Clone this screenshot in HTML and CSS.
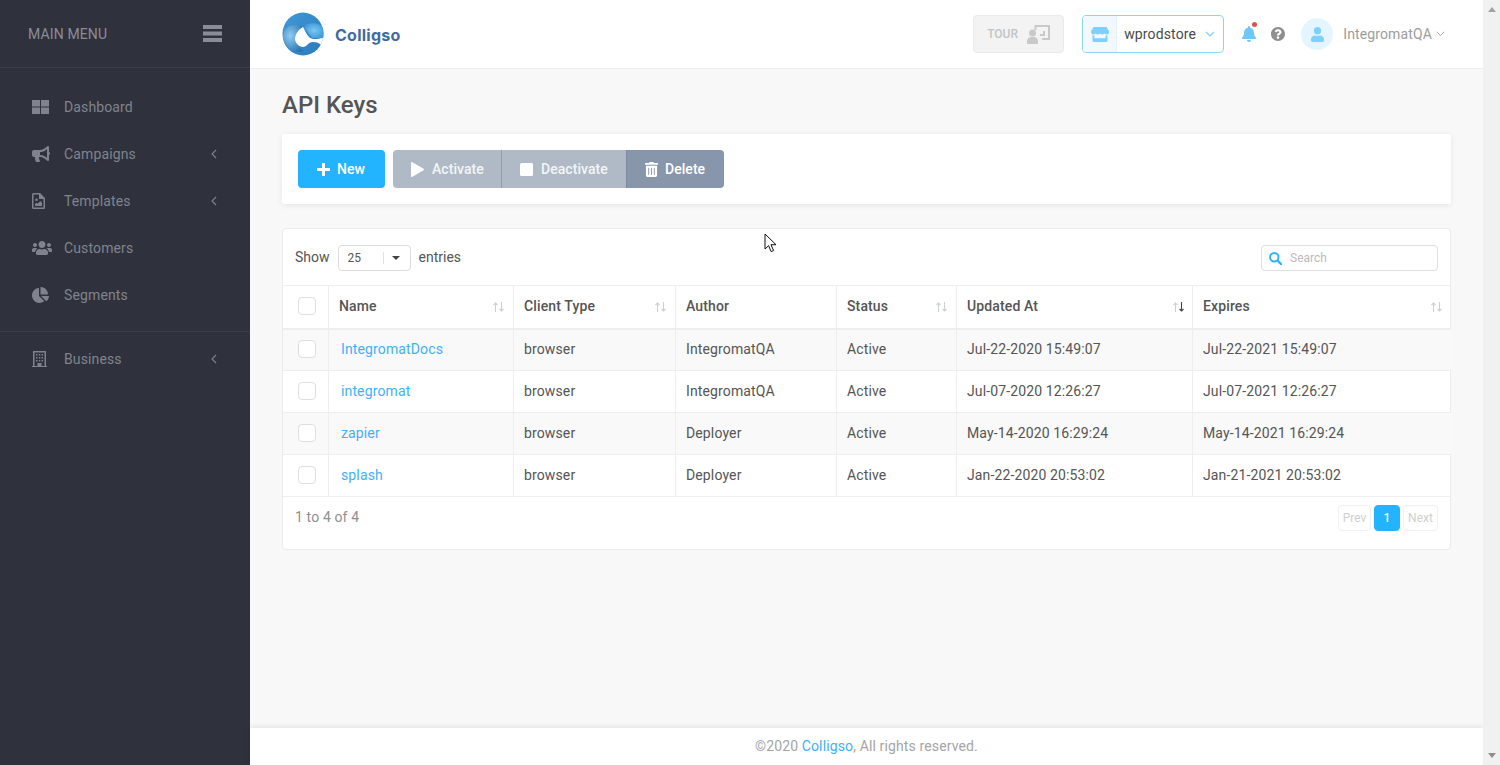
FILE: index.html
```html
<!DOCTYPE html>
<html lang="en">
<head>
<meta charset="utf-8">
<title>API Keys - Colligso</title>
<link rel="stylesheet" href="styles.css">
</head>
<body>
<div class="app">
  <aside class="sidebar">
    <div class="side-head">
      <span class="side-title">MAIN MENU</span>
      <svg class="burger" width="19" height="17" viewBox="0 0 19 17"><path d="M0 0h19v4H0zM0 6.500h19v4H0zM0 13h19v4H0z" fill="#8a8d97"/></svg>
    </div>
    <nav class="side-group">
      <a class="side-item"><span class="side-icon"><svg width="17" height="14" viewBox="0 0 17 14"><path d="M0 0h8v6.500H0zM9 0h8v6.500H9zM0 7.500h8V14H0zM9 7.500h8V14H9z"/></svg></span><span class="side-label">Dashboard</span></a>
      <a class="side-item"><span class="side-icon"><svg width="18" height="16" viewBox="0 0 576 512"><path d="M576 240c0-23.630-12.950-44.040-32-55.120V32.010C544 23.260 537.020 0 512 0c-7.120 0-14.190 2.380-19.980 7.020l-85.030 68.030C364.280 109.190 310.660 128 256 128H64c-35.350 0-64 28.650-64 64v96c0 35.350 28.650 64 64 64h33.700c-1.390 10.480-2.180 21.140-2.180 32 0 39.770 9.260 77.350 25.560 110.940 5.190 10.690 16.520 17.060 28.400 17.060h74.280c26.050 0 41.690-29.840 25.900-50.560-16.400-21.520-26.150-48.360-26.150-77.440 0-11.110 1.620-21.790 4.410-32H256c54.660 0 108.280 18.810 150.980 52.950l85.030 68.030a32.023 32.023 0 0 0 19.980 7.020c24.920 0 32-22.780 32-32V295.130C563.050 284.040 576 263.630 576 240zm-96 141.420l-33.050-26.440C392.950 311.780 325.120 288 256 288v-96c69.120 0 136.950-23.780 190.950-66.980L480 98.580v282.840z"/></svg></span><span class="side-label">Campaigns</span><svg class="side-chev" width="6" height="10" viewBox="0 0 6 10"><path d="M5 1 1 5l4 4" fill="none" stroke="#80838d" stroke-width="1.100"/></svg></a>
      <a class="side-item"><span class="side-icon"><svg width="13" height="16" viewBox="0 0 13 16"><path fill-rule="evenodd" d="M1.500 0H8l5 5v9.500a1.500 1.500 0 0 1-1.500 1.500h-10A1.500 1.500 0 0 1 0 14.500v-13A1.500 1.500 0 0 1 1.500 0zM1.500 1.500v13h10V6H7V1.500zM4.500 5.500a1.300 1.300 0 1 1 0 2.600 1.300 1.300 0 0 1 0-2.600zM3 13v-2l1.500-1.300 1.200 1.100L8.300 8 10 10v3z"/></svg></span><span class="side-label">Templates</span><svg class="side-chev" width="6" height="10" viewBox="0 0 6 10"><path d="M5 1 1 5l4 4" fill="none" stroke="#80838d" stroke-width="1.100"/></svg></a>
      <a class="side-item"><span class="side-icon"><svg width="20" height="16" viewBox="0 0 640 512"><path d="M96 224c35.300 0 64-28.700 64-64s-28.700-64-64-64-64 28.700-64 64 28.700 64 64 64zm448 0c35.300 0 64-28.700 64-64s-28.700-64-64-64-64 28.700-64 64 28.700 64 64 64zm32 32h-64c-17.600 0-33.500 7.100-45.100 18.600 40.300 22.100 68.900 62 75.100 109.400h66c17.700 0 32-14.300 32-32v-32c0-35.300-28.700-64-64-64zm-256 0c61.900 0 112-50.100 112-112S381.900 32 320 32 208 82.100 208 144s50.100 112 112 112zm76.800 32h-8.300c-20.800 10-43.900 16-68.500 16s-47.600-6-68.500-16h-8.300C179.600 288 128 339.600 128 403.200V432c0 26.500 21.500 48 48 48h288c26.500 0 48-21.500 48-48v-28.800c0-63.600-51.600-115.200-115.200-115.200zm-223.700-13.400C161.500 263.100 145.600 256 128 256H64c-35.300 0-64 28.700-64 64v32c0 17.700 14.300 32 32 32h65.900c6.300-47.400 34.900-87.300 75.200-109.400z"/></svg></span><span class="side-label">Customers</span></a>
      <a class="side-item"><span class="side-icon"><svg width="17" height="16" viewBox="0 0 544 512"><path d="M527.790 288H290.500l158.030 158.030c6.040 6.040 15.980 6.530 22.190.68 38.700-36.460 65.320-85.610 73.130-140.860 1.340-9.460-6.510-17.850-16.060-17.850zm-15.830-64.800C503.720 103.740 408.260 8.280 288.800.04 279.680-.59 272 7.100 272 16.240V240h223.770c9.140 0 16.820-7.680 16.190-16.800zM224 288V50.710c0-9.550-8.390-17.400-17.840-16.060C86.990 51.490-4.100 155.600.14 280.370 4.500 408.510 114.830 513.590 243.030 511.980c50.400-.63 96.970-16.870 135.260-44.030 7.900-5.600 8.420-17.230 1.570-24.080L224 288z"/></svg></span><span class="side-label">Segments</span></a>
    </nav>
    <nav class="side-group side-group-last">
      <a class="side-item"><span class="side-icon"><svg width="15" height="16" viewBox="0 0 15 16"><path fill-rule="evenodd" d="M1 0h13v15h1v1H0v-1h1zM2.500 1.500v13.500h3v-3h4v3h3V1.500zM4 3h1.500v1.500H4zM6.800 3h1.500v1.500H6.800zM9.500 3H11v1.500H9.500zM4 6h1.500v1.500H4zM6.800 6h1.500v1.500H6.800zM9.500 6H11v1.500H9.500zM4 9h1.500v1.500H4zM6.800 9h1.500v1.500H6.800zM9.500 9H11v1.500H9.500z"/></svg></span><span class="side-label">Business</span><svg class="side-chev" width="6" height="10" viewBox="0 0 6 10"><path d="M5 1 1 5l4 4" fill="none" stroke="#80838d" stroke-width="1.100"/></svg></a>
    </nav>
  </aside>

  <div class="main">
    <header class="topbar">
      <div class="brand">
        <svg class="logo" width="42" height="44" viewBox="0 0 42 44">
          <defs>
            <linearGradient id="lg" x1="0" y1="0" x2="1" y2="1"><stop offset="0" stop-color="#3f9ad8"/><stop offset="1" stop-color="#2c79b9"/></linearGradient>
            <radialGradient id="rg" cx="0.35" cy="0.4" r="0.7"><stop offset="0" stop-color="#8fcdf0"/><stop offset="1" stop-color="#2a73b3"/></radialGradient>
            <radialGradient id="rb" cx="0.5" cy="0.5" r="0.55"><stop offset="0" stop-color="#7cc8f2"/><stop offset="1" stop-color="#3f9ad8"/></radialGradient>
            <clipPath id="disc"><ellipse cx="21" cy="22" rx="20.500" ry="21.500"/></clipPath>
          </defs>
          <g clip-path="url(#disc)">
            <rect width="42" height="44" fill="url(#lg)"/>
            <path d="M1 27C0 18 6 12 14 13c3 .5 5 1 7 2-5 3-8 8-8 12 0 5 4 9 9 12-10 3-20-2-21-12z" fill="url(#rg)"/>
            <path d="M22 15c3-5 14-6 20 1v10H30z" fill="url(#rb)"/>
            <path d="M21 15C17 17 13 22 13 27 13 31 17 35 21 35 25 35 26 30 31 30 35 30 37 31 39 33L44 28 41 26C35 27 30 28 27 25 24 22 23 18 21 15z" fill="#fff"/>
          </g>
        </svg>
        <span class="brand-name">Colligso</span>
      </div>
      <div class="top-right">
        <button class="tour"><span>TOUR</span><svg width="23" height="19" viewBox="0 0 23 19"><path fill="none" stroke="#c9c9c9" stroke-width="2" d="M8.500 5V1h13.500v13h-7M13 10h4V6"/><circle cx="5.500" cy="8" r="3.500" fill="#c9c9c9"/><path fill="#c9c9c9" d="M0 19v-3c0-2 2-4 4-4h3c2 0 4 2 4 4v3z"/></svg></button>
        <div class="store">
          <span class="store-icon"><svg width="18" height="15" viewBox="0 0 616 512"><path fill="#7fcfff" d="M602 118.600L537.100 15C531.300 5.700 521 0 510 0H106C95 0 84.700 5.700 78.900 15L14 118.600c-33.900 54.100-3.800 129.300 59.600 137.900 4.600.6 9.200 1 13.700 1 29.900 0 56.400-13.100 74.800-33.400 18.400 20.300 45 33.400 74.800 33.400 29.900 0 56.400-13.100 74.800-33.400 18.400 20.300 45 33.400 74.800 33.400 29.900 0 56.400-13.100 74.800-33.400 18.500 20.300 45 33.400 74.800 33.400 4.600 0 9.100-.3 13.700-1 63.600-8.500 93.800-83.700 59.900-137.900zM529.500 288c-10 0-19.900-1.500-29.500-3.800V384H116v-99.800c-9.600 2.200-19.500 3.800-29.500 3.800-6 0-12.100-.4-18-1.200-5.600-.8-11.100-2.100-16.400-3.600V480c0 17.700 14.300 32 32 32h448c17.700 0 32-14.300 32-32V283.200c-5.400 1.600-10.800 2.900-16.400 3.600-6.100.8-12.100 1.200-18.200 1.200z"/></svg></span>
          <span class="store-name">wprodstore</span>
          <svg class="store-chev" width="10" height="6" viewBox="0 0 10 6"><path d="M1 1l4 4 4-4" fill="none" stroke="#7fcfff" stroke-width="1.200"/></svg>
        </div>
        <span class="bell"><svg width="14" height="16" viewBox="0 0 448 512"><path fill="#6cc8ff" d="M224 512c35.320 0 63.970-28.650 63.970-64H160.030c0 35.350 28.650 64 63.970 64zm215.390-149.710c-19.320-20.760-55.470-51.990-55.470-154.290 0-77.700-54.480-139.900-127.940-155.160V32c0-17.670-14.320-32-31.980-32s-31.980 14.330-31.980 32v20.840C118.560 68.100 64.080 130.300 64.080 208c0 102.300-36.150 133.530-55.470 154.290-6 6.450-8.660 14.160-8.610 21.710.11 16.400 12.980 32 32.100 32h383.800c19.120 0 32-15.600 32.100-32 .05-7.550-2.610-15.270-8.610-21.710z"/></svg><i class="bell-dot"></i></span>
        <svg class="help" width="14" height="14" viewBox="8 8 496 496"><path fill="#8f8f8f" d="M504 256c0 136.997-111.043 248-248 248S8 392.997 8 256C8 119.083 119.043 8 256 8s248 111.083 248 248zM262.655 90c-54.497 0-89.255 22.957-116.549 63.758-3.536 5.286-2.353 12.415 2.715 16.258l34.699 26.310c5.205 3.947 12.621 3.008 16.665-2.122 17.864-22.658 30.113-35.797 57.303-35.797 20.429 0 45.698 13.148 45.698 32.958 0 14.976-12.363 22.667-32.534 33.976C247.128 238.528 216 254.941 216 296v4c0 6.627 5.373 12 12 12h56c6.627 0 12-5.373 12-12v-1.333c0-28.462 83.186-29.647 83.186-106.667 0-58.002-60.165-102-116.531-102zM256 338c-25.365 0-46 20.635-46 46 0 25.364 20.635 46 46 46s46-20.636 46-46c0-25.365-20.635-46-46-46z"/></svg>
        <span class="avatar"><svg width="13" height="15" viewBox="0 0 448 512"><path fill="#7fcfff" d="M224 256c70.700 0 128-57.300 128-128S294.700 0 224 0 96 57.300 96 128s57.300 128 128 128zm89.600 32h-16.700c-22.200 10.200-46.900 16-72.900 16s-50.600-5.800-72.900-16h-16.700C60.200 288 0 348.200 0 422.400V464c0 26.500 21.500 48 48 48h352c26.500 0 48-21.500 48-48v-41.600c0-74.200-60.200-134.400-134.400-134.400z"/></svg></span>
        <span class="user-name">IntegromatQA</span>
        <svg class="user-chev" width="9" height="6" viewBox="0 0 9 6"><path d="M.7.8l3.800 3.800L8.300.8" fill="none" stroke="#a5a5a5" stroke-width="1"/></svg>
      </div>
    </header>

    <main class="content">
      <h1 class="page-title">API Keys</h1>
      <section class="actions">
        <button class="btn btn-new"><svg width="13" height="13" viewBox="0 0 13 13"><path d="M5 0h3v5h5v3H8v5H5V8H0V5h5z" fill="#fff"/></svg>New</button>
        <div class="btn-group">
          <button class="btn btn-muted btn-activate"><svg width="13" height="15" viewBox="0 0 13 15"><path d="M0 1v13c0 .8.8 1.200 1.500.8l11-6.500c.6-.4.6-1.200 0-1.600L1.500.2C.8-.2 0 .2 0 1z" fill="#fff"/></svg>Activate</button>
          <button class="btn btn-muted btn-deactivate"><svg width="13" height="13" viewBox="0 0 13 13"><rect width="13" height="13" rx="1.500" fill="#fff"/></svg>Deactivate</button>
          <button class="btn btn-delete"><svg width="13" height="15" viewBox="0 0 448 512"><path fill="#fff" d="M32 464a48 48 0 0 0 48 48h288a48 48 0 0 0 48-48V128H32zm272-256a16 16 0 0 1 32 0v224a16 16 0 0 1-32 0zm-96 0a16 16 0 0 1 32 0v224a16 16 0 0 1-32 0zm-96 0a16 16 0 0 1 32 0v224a16 16 0 0 1-32 0zM432 32H312l-9.400-18.700A24 24 0 0 0 281.100 0H166.800a23.720 23.720 0 0 0-21.400 13.300L136 32H16A16 16 0 0 0 0 48v32a16 16 0 0 0 16 16h416a16 16 0 0 0 16-16V48a16 16 0 0 0-16-16z"/></svg>Delete</button>
        </div>
      </section>

      <section class="card">
        <div class="table-tools">
          <div class="length">
            <span>Show</span>
            <span class="select"><span class="select-value">25</span><i class="select-sep"></i><i class="select-caret"></i></span>
            <span>entries</span>
          </div>
          <label class="search">
            <svg width="13" height="13" viewBox="0 0 13 13"><circle cx="5.300" cy="5.300" r="4.200" fill="none" stroke="#2bb3ff" stroke-width="2"/><path d="M8.500 8.500l3.600 3.600" stroke="#2bb3ff" stroke-width="2.200" stroke-linecap="round"/></svg>
            <span class="search-ph">Search</span>
          </label>
        </div>
        <table class="keys">
          <colgroup>
            <col class="c0"><col class="c1"><col class="c2"><col class="c3"><col class="c4"><col class="c5"><col class="c6">
          </colgroup>
          <thead>
            <tr>
              <th class="cb"><i class="check"></i></th>
              <th>Name<svg class="sort" width="11" height="10" viewBox="0 0 11 10"><path d="M2.500 10V1M.5 3 2.500 1l2 2"/><path d="M8.500 0v9M6.500 7l2 2 2-2"/></svg></th>
              <th>Client Type<svg class="sort" width="11" height="10" viewBox="0 0 11 10"><path d="M2.500 10V1M.5 3 2.500 1l2 2"/><path d="M8.500 0v9M6.500 7l2 2 2-2"/></svg></th>
              <th>Author</th>
              <th>Status<svg class="sort" width="11" height="10" viewBox="0 0 11 10"><path d="M2.500 10V1M.5 3 2.500 1l2 2"/><path d="M8.500 0v9M6.500 7l2 2 2-2"/></svg></th>
              <th>Updated At<svg class="sort sort-active" width="11" height="10" viewBox="0 0 11 10"><path d="M2.500 10V1M.5 3 2.500 1l2 2"/><path class="on" d="M8.500 0v9M6.500 7l2 2 2-2"/></svg></th>
              <th>Expires<svg class="sort" width="11" height="10" viewBox="0 0 11 10"><path d="M2.500 10V1M.5 3 2.500 1l2 2"/><path d="M8.500 0v9M6.500 7l2 2 2-2"/></svg></th>
            </tr>
          </thead>
          <tbody>
            <tr class="odd"><td class="cb"><i class="check"></i></td><td class="name"><a>IntegromatDocs</a></td><td>browser</td><td>IntegromatQA</td><td>Active</td><td>Jul-22-2020 15:49:07</td><td>Jul-22-2021 15:49:07</td></tr>
            <tr><td class="cb"><i class="check"></i></td><td class="name"><a>integromat</a></td><td>browser</td><td>IntegromatQA</td><td>Active</td><td>Jul-07-2020 12:26:27</td><td>Jul-07-2021 12:26:27</td></tr>
            <tr class="odd"><td class="cb"><i class="check"></i></td><td class="name"><a>zapier</a></td><td>browser</td><td>Deployer</td><td>Active</td><td>May-14-2020 16:29:24</td><td>May-14-2021 16:29:24</td></tr>
            <tr><td class="cb"><i class="check"></i></td><td class="name"><a>splash</a></td><td>browser</td><td>Deployer</td><td>Active</td><td>Jan-22-2020 20:53:02</td><td>Jan-21-2021 20:53:02</td></tr>
          </tbody>
        </table>
        <div class="table-foot">
          <span class="info">1 to 4 of 4</span>
          <div class="pager">
            <span class="page-btn page-prev">Prev</span>
            <span class="page-btn page-on">1</span>
            <span class="page-btn page-next">Next</span>
          </div>
        </div>
      </section>
      <svg class="cursor" width="14" height="20" viewBox="0 0 14 20"><path d="M1 1v15l3.600-3.400 2.500 6 2.500-1-2.600-5.900h5z" fill="#fff" stroke="#111" stroke-width="1"/></svg>
    </main>

    <footer class="footer">©2020 <a>Colligso</a>, All rights reserved.</footer>
  </div>

  <div class="scrollbar">
    <i class="arrow-up"></i>
    <i class="arrow-down"></i>
  </div>
</div>
</body>
</html>
```
FILE: styles.css
```css
* { box-sizing: border-box; }
html, body { margin: 0; height: 100%; overflow: hidden; }
body { font-family: Roboto, "Liberation Sans", sans-serif; font-size: 14px; letter-spacing: .13px; color: #555; background: #f8f8f8; }
.app { display: flex; height: 765px; }

.sidebar { width: 250px; flex: none; background: #2f323d; color: #80838d; }
.side-head { height: 68px; display: flex; align-items: center; justify-content: space-between; padding: 0 28px; border-bottom: 1px solid #3a3d48; }
.side-title { font-size: 14px; color: #8a8d97; }
.side-group { padding: 15px 0 13px; border-bottom: 1px solid #3a3d48; }
.side-group-last { padding: 3px 0; border-bottom: 0; }
.side-item { height: 47px; display: flex; align-items: center; padding: 0 33px 0 32px; font-size: 14px; }
.side-icon { width: 32px; flex: none; display: flex; align-items: center; }
.side-icon svg { fill: #80838d; display: block; }
.side-label { flex: 1; }
.side-chev { display: block; }

.main { flex: 1; min-width: 0; display: flex; flex-direction: column; position: relative; }
.topbar { height: 69px; flex: none; background: #fff; border-bottom: 1px solid #eceef0; display: flex; align-items: center; justify-content: space-between; padding: 0 38px 0 32px; }
.brand { display: flex; align-items: center; gap: 11px; }
.logo { display: block; margin-top: -1px; }
.brand-name { font-family: Inter, "Open Sans", sans-serif; font-weight: 700; font-size: 16px; margin-top: 2px; color: #3f6ba3; letter-spacing: .25px; }
.top-right { display: flex; align-items: center; }
.tour { width: 91px; height: 38px; border: 1px solid #eaeaea; border-radius: 4px; background: #f3f3f3; display: flex; align-items: center; justify-content: space-between; padding: 0 13px 0 13px; font-family: inherit; font-size: 12px; font-weight: 500; color: #c4c4c4; margin-right: 18px; }
.tour svg { display: block; }
.store { width: 142px; height: 38px; border: 1px solid #8ad4ff; border-radius: 4px; display: flex; align-items: center; overflow: hidden; color: #4a4a4a; margin-right: 18px; }
.store-icon { width: 34px; height: 100%; background: #f1f9ff; border-right: 1px solid #e2f3ff; display: flex; align-items: center; justify-content: center; flex: none; }
.store-name { margin-left: 7px; font-size: 14px; }
.store-chev { margin-left: 9px; }
.bell { position: relative; display: flex; margin-right: 15px; }
.bell-dot { position: absolute; right: -1px; top: -4px; width: 5px; height: 5px; background: #d9534f; border-radius: 50%; }
.help { margin-right: 16px; display: block; }
.avatar { width: 32px; height: 32px; border-radius: 50%; background: #e5f5ff; display: flex; align-items: center; justify-content: center; margin-right: 10px; }
.user-name { color: #9d9d9d; font-size: 14px; }
.user-chev { margin-left: 4px; }

.content { flex: 1; padding: 0 32px; position: relative; }
.page-title { margin: 23px 0 15px; font-size: 24px; line-height: 27px; font-weight: 500; color: #555; letter-spacing: 0; }
.actions { height: 70px; background: #fff; border-radius: 2px; box-shadow: 0 1px 6px rgba(0,0,0,.08); display: flex; align-items: center; padding: 0 16px; gap: 8px; margin-bottom: 24px; }
.btn { height: 38px; border: 0; display: inline-flex; align-items: center; font-family: inherit; font-size: 14px; font-weight: 500; letter-spacing: .05px; color: #fff; padding: 0; }
.btn svg { margin-right: 8px; display: block; }
.btn-new { width: 87px; background: #22b4ff; border-radius: 4px; padding-left: 19px; }
.btn-new svg { margin-right: 7px; }
.btn-group { display: flex; }
.btn-muted { background: #b0bac6; color: #f3f5f7; }
.btn-activate { width: 109px; padding-left: 18px; border-radius: 4px 0 0 4px; border-right: 1px solid #929daa; }
.btn-deactivate { width: 125px; padding-left: 18px; border-right: 1px solid #808c9f; }
.btn-delete { width: 97px; padding-left: 18px; background: #8896ab; border-radius: 0 4px 4px 0; }
.btn-delete svg { margin-right: 7px; }

.card { background: #fff; border: 1px solid #ebebeb; border-radius: 4px; height: 322px; }
.table-tools { height: 56px; display: flex; align-items: center; justify-content: space-between; padding: 0 12px 0 12px; }
.length { display: flex; align-items: center; gap: 8px; color: #555; letter-spacing: 0; }
.select { width: 73px; height: 26px; margin-top: 2px; border: 1px solid #dcdcdc; border-radius: 4px; display: flex; align-items: center; padding-left: 9px; font-size: 12px; letter-spacing: 0; color: #555; }
.select-value { width: 35px; }
.select-sep { width: 1px; height: 12px; background: #e2e2e2; }
.select-caret { margin-left: 8px; width: 0; height: 0; border: 4px solid transparent; border-top-color: #444; border-bottom: 0; }
.search { width: 177px; height: 26px; margin-top: 2px; border: 1px solid #dcdfe3; border-radius: 4px; display: flex; align-items: center; padding-left: 7px; gap: 8px; font-size: 12px; letter-spacing: 0; color: #bbb; }
.search svg { display: block; }

.keys { width: 1168px; table-layout: fixed; border-collapse: collapse; }
.c0 { width: 45px; } .c1 { width: 185px; } .c2 { width: 162px; } .c3 { width: 161px; } .c4 { width: 120px; } .c5 { width: 236px; } .c6 { width: 259px; }
.keys th { height: 43px; text-align: left; font-weight: 500; color: #555; padding: 0 10.500px 2px; border-right: 1px solid #eee; border-top: 1px solid #eee; border-bottom: 2px solid #eee; position: relative; }
.keys td { height: 42px; padding: 0 10.500px 2px; color: #555; border-right: 1px solid #eee; border-bottom: 1px solid #eee; }
.keys th:last-child, .keys td:last-child { border-right: 0; }
.keys tr.odd td { background: #f9f9f9; }
.keys .cb { padding: 0 0 2px 15px; }
.keys .name { padding-left: 12.500px; }
.keys .name a { color: #3fb0fb; }
.check { display: block; width: 18px; height: 18px; border: 1px solid #dfdfdf; border-radius: 4px; background: #fff; }
.sort { position: absolute; right: 9px; top: 16px; fill: none; stroke: #ccd0d5; stroke-width: 1.100; display: block; }
.sort-active { right: 8px; }
.sort .on { stroke: #444; }

.table-foot { display: flex; justify-content: space-between; padding: 8px 12px 0; }
.info { color: #8f8f8f; line-height: 26px; margin-top: -1px; }
.pager { display: flex; gap: 3px; letter-spacing: 0; }
.page-btn { height: 26px; border: 1px solid #f0f0f0; border-radius: 4px; display: flex; align-items: center; justify-content: center; font-size: 12px; color: #cfcfcf; }
.page-prev { width: 33px; }
.page-on { width: 26px; background: #22b4ff; border-color: #22b4ff; color: #fff; font-weight: 500; }
.page-next { width: 35px; }

.cursor { position: absolute; left: 514px; top: 164px; }

.footer { height: 37px; flex: none; background: #fff; box-shadow: 0 -1px 6px rgba(0,0,0,.1); white-space: pre; text-align: center; line-height: 37px; color: #a5a5a5; font-size: 14px; }
.footer a { color: #3fb0fb; }

.scrollbar { width: 17px; flex: none; background: #f1f1f1; position: relative; }
.arrow-up { position: absolute; left: 5px; top: 7px; border: 4px solid transparent; border-top: 0; border-bottom: 5px solid #a3a3a3; }
.arrow-down { position: absolute; left: 5px; bottom: 7px; border: 4px solid transparent; border-bottom: 0; border-top: 5px solid #8f8f8f; }
```
